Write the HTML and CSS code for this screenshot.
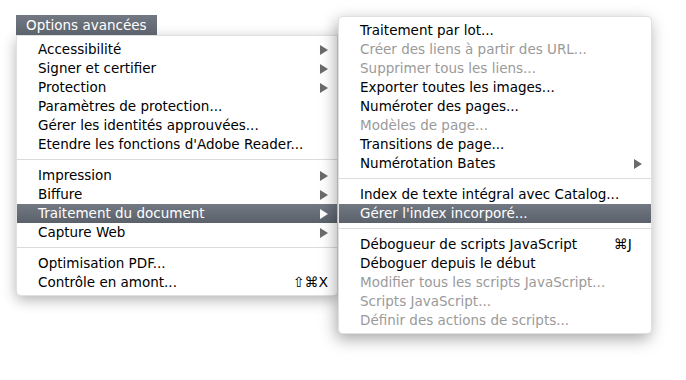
FILE: index.html
```html
<!DOCTYPE html>
<html lang="fr">
<head>
	<meta charset="UTF-8">
	<title>Options avancées</title>
	<link rel="stylesheet" href="styles.css">
</head>
<body>
	<div class="stage">
		<!-- titre du menu -->
		<div class="tab">Options avancées</div>
		<!-- menu principal -->
		<ul class="menu main">
			<li class="item"><span class="label">Accessibilité</span><span class="arrow"></span></li>
			<li class="item"><span class="label">Signer et certifier</span><span class="arrow"></span></li>
			<li class="item"><span class="label">Protection</span><span class="arrow"></span></li>
			<li class="item"><span class="label">Paramètres de protection...</span></li>
			<li class="item"><span class="label">Gérer les identités approuvées...</span></li>
			<li class="item"><span class="label">Etendre les fonctions d'Adobe Reader...</span></li>
			<li class="sep"></li>
			<li class="item"><span class="label">Impression</span><span class="arrow"></span></li>
			<li class="item"><span class="label">Biffure</span><span class="arrow"></span></li>
			<li class="item active"><span class="label">Traitement du document</span><span class="arrow"></span></li>
			<li class="item"><span class="label">Capture Web</span><span class="arrow"></span></li>
			<li class="sep"></li>
			<li class="item"><span class="label">Optimisation PDF...</span></li>
			<li class="item"><span class="label">Contrôle en amont...</span><span class="key">⇧⌘X</span></li>
		</ul>
		<!-- sous-menu -->
		<ul class="menu sub">
			<li class="item"><span class="label">Traitement par lot...</span></li>
			<li class="item off"><span class="label">Créer des liens à partir des URL...</span></li>
			<li class="item off"><span class="label">Supprimer tous les liens...</span></li>
			<li class="item"><span class="label">Exporter toutes les images...</span></li>
			<li class="item"><span class="label">Numéroter des pages...</span></li>
			<li class="item off"><span class="label">Modèles de page...</span></li>
			<li class="item"><span class="label">Transitions de page...</span></li>
			<li class="item"><span class="label">Numérotation Bates</span><span class="arrow"></span></li>
			<li class="sep"></li>
			<li class="item"><span class="label">Index de texte intégral avec Catalog...</span></li>
			<li class="item active"><span class="label">Gérer l'index incorporé...</span></li>
			<li class="sep"></li>
			<li class="item"><span class="label">Débogueur de scripts JavaScript</span><span class="key wide">⌘J</span></li>
			<li class="item"><span class="label">Déboguer depuis le début</span></li>
			<li class="item off"><span class="label">Modifier tous les scripts JavaScript...</span></li>
			<li class="item off"><span class="label">Scripts JavaScript...</span></li>
			<li class="item off"><span class="label">Définir des actions de scripts...</span></li>
		</ul>
	</div>
</body>
</html>
```
FILE: styles.css
```css
*{
	margin:0;
	padding:0;
}
body{
	background-color: #fff;
	font-family: "DejaVu Sans", "Liberation Sans", sans-serif;
	font-size: 13.5px;
	color: #000;
}
.stage{
	position: relative;
	height: 365px;
	padding: 15px 0 0 16px;
}
.tab{
	display: inline-block;
	height: 20px;
	line-height: 20px;
	padding: 0 10px;
	font-size: 13.5px;
	color: #fff;
	background: linear-gradient(#737982, #5d636c);
}
.menu{
	list-style: none;
	background-color: #fff;
	border: 1px solid rgba(0,0,0,.12);
	padding: 4px 0 3px;
	box-shadow: 0 4px 14px rgba(0,0,0,.3);
}
.main{
	width: 320px;
	border-radius: 0 0 5px 5px;
}
/* le sous-menu passe par-dessus le menu principal */
.sub{
	position: absolute;
	left: 338px;
	top: 16px;
	width: 312px;
	border-radius: 5px;
	box-shadow: -2px 5px 16px rgba(0,0,0,.35);
}
.item{
	display: flex;
	align-items: center;
	height: 19px;
	line-height: 19px;
	padding: 0 9px 0 21px;
	white-space: nowrap;
}
.label{
	flex: 1;
}
.off{
	color: #9a9a9a;
}
.active{
	color: #fff;
	background: linear-gradient(#727983, #5a616b);
}
.arrow{
	width: 0;
	height: 0;
	border-left: 8px solid #6b6b6b;
	border-top: 5px solid transparent;
	border-bottom: 5px solid transparent;
}
.active .arrow{
	border-left-color: #fff;
}
.key{
	font-size: 14px;
}
.key.wide{
	margin-right: 10px;
}
.sep{
	height: 1px;
	background-color: #dcdcdc;
	margin: 5px 0 6px;
}
```
